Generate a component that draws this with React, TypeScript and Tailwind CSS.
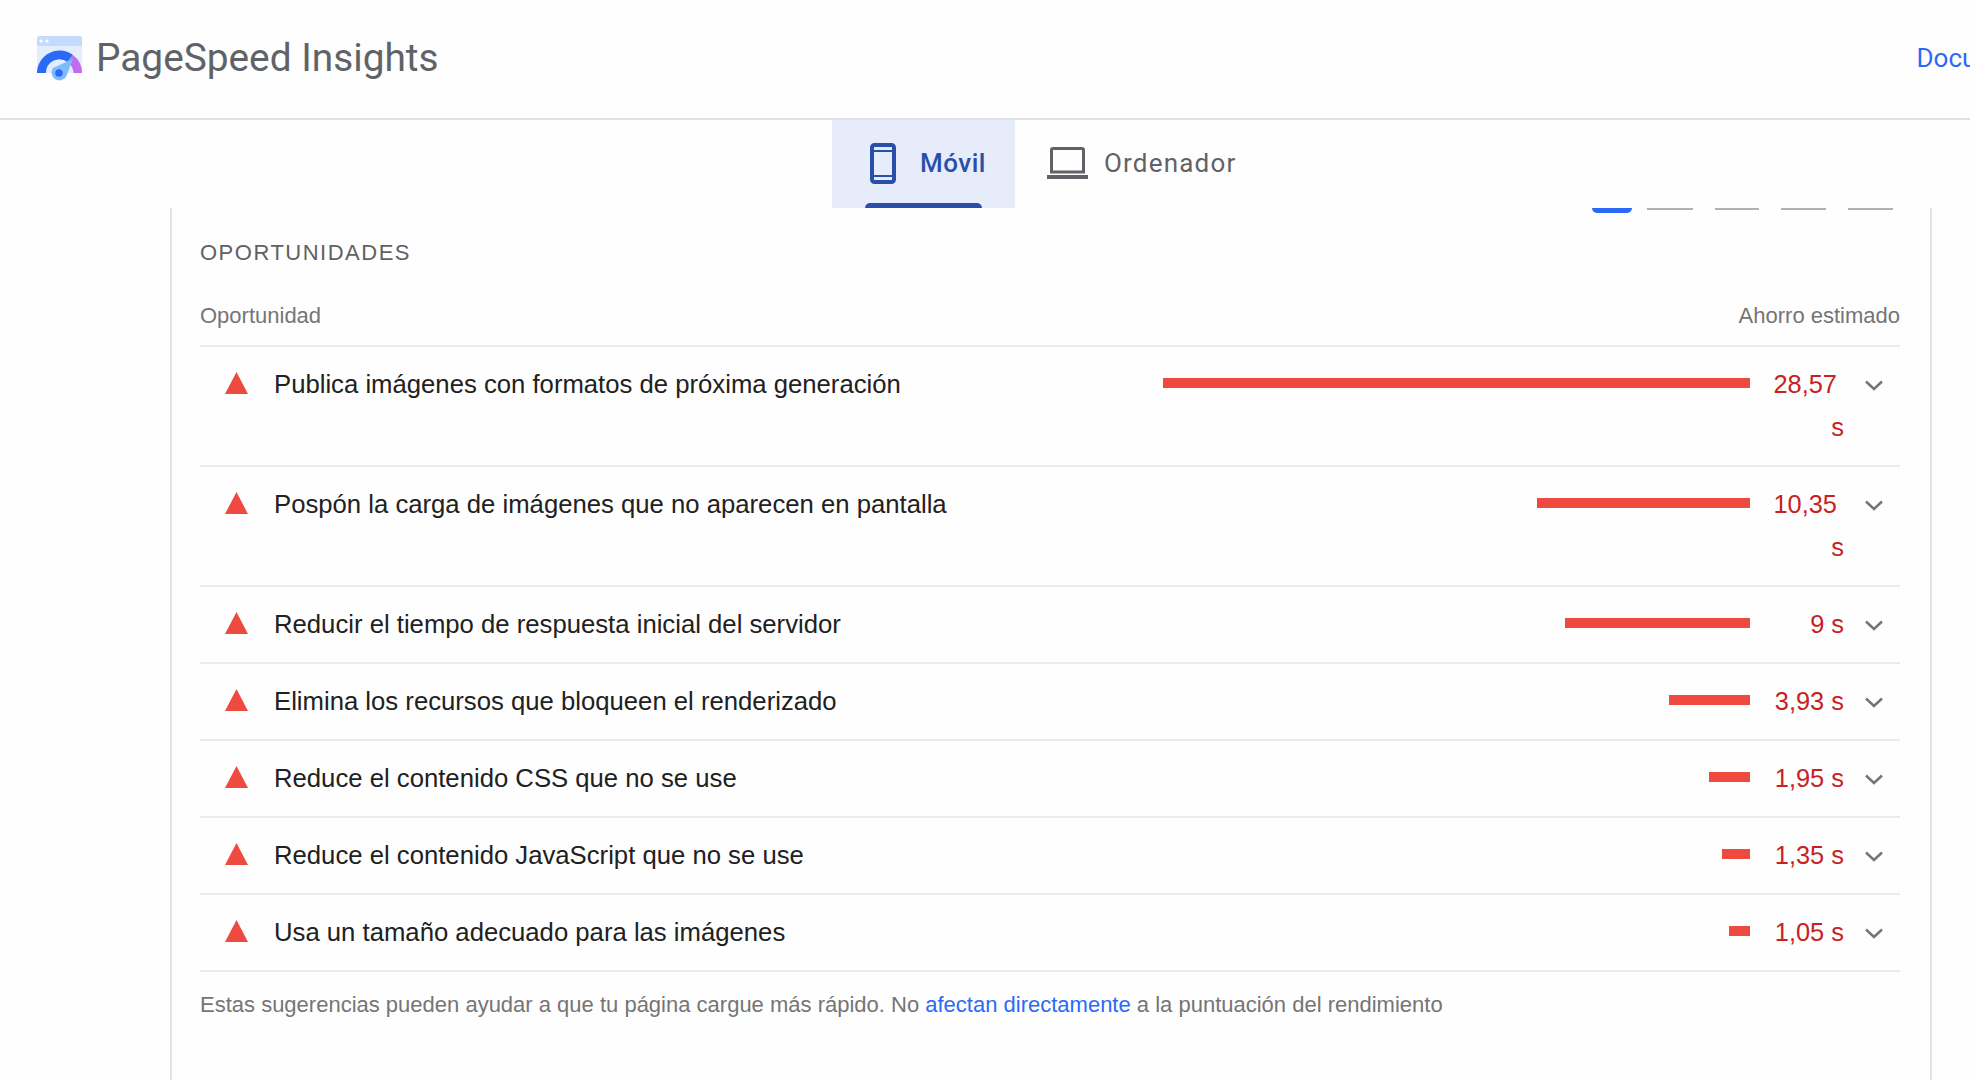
const rows = [
  { title: "Publica imágenes con formatos de próxima generación", bar: 587, value: "28,57\u00a0 s" },
  { title: "Pospón la carga de imágenes que no aparecen en pantalla", bar: 213, value: "10,35\u00a0 s" },
  { title: "Reducir el tiempo de respuesta inicial del servidor", bar: 185, value: "9 s" },
  { title: "Elimina los recursos que bloqueen el renderizado", bar: 81, value: "3,93 s" },
  { title: "Reduce el contenido CSS que no se use", bar: 41, value: "1,95 s" },
  { title: "Reduce el contenido JavaScript que no se use", bar: 28, value: "1,35 s" },
  { title: "Usa un tamaño adecuado para las imágenes", bar: 21, value: "1,05 s" },
];

const Logo = () => (
  <svg width="45" height="46" viewBox="0 0 45 46" className="shrink-0">
    <path d="M0 3a2 2 0 0 1 2-2h41a2 2 0 0 1 2 2v8H0z" fill="#c3dcfd" />
    <path d="M0 11h45v27H0z" fill="#e3edfe" />
    <circle cx="4" cy="6" r="1.6" fill="#fff" />
    <circle cx="10" cy="6" r="1.6" fill="#fff" />
    <path d="M0 38a22.500 22.500 0 0 1 36-18l-5.500 7A13.500 13.500 0 0 0 9 38z" fill="#2a6af6" />
    <path d="M36 20a22.500 22.500 0 0 1 9 18h-8.500a14 14 0 0 0-5.500-10.500z" fill="#c06cf0" />
    <path d="M16 33 36 24 29 42a7.800 7.800 0 0 1-13-9z" fill="#7ebcf9" />
    <circle cx="22" cy="38" r="3.800" fill="#2a6af6" />
  </svg>
);

const PhoneIcon = () => (
  <svg width="26" height="41" viewBox="0 0 26 41" fill="none" stroke="#2a4fa8" className="shrink-0">
    <rect x="2" y="2" width="22" height="37" rx="2.500" strokeWidth="4" />
    <path d="M2 8h22M2 33h22" strokeWidth="2" />
  </svg>
);

const LaptopIcon = () => (
  <svg width="41" height="32" viewBox="0 0 41 32" fill="none" className="shrink-0">
    <path d="M4.500 25V3a1.500 1.500 0 0 1 1.500-1.500h29a1.500 1.500 0 0 1 1.500 1.500v22z" stroke="#5f6368" strokeWidth="3" />
    <path d="M0 28h41v4H0z" fill="#5f6368" />
  </svg>
);

const Triangle = () => (
  <svg width="23" height="22" viewBox="0 0 23 22" className="ml-[25px] mt-[9px] shrink-0">
    <path d="M11.500 0 23 22H0z" fill="#ef4a3f" />
  </svg>
);

const Chevron = () => (
  <svg width="18" height="11" viewBox="0 0 18 11" fill="none" stroke="#757575" strokeWidth="2.500" className="ml-[21px] mt-[17px] shrink-0">
    <path d="M1 1.500 9 9l8-7.500" />
  </svg>
);

export default function App() {
  return (
    <div className="h-[1080px] w-[1970px] overflow-hidden bg-[#fefefe] font-['Liberation_Sans',sans-serif]">
      {/* Header */}
      <header className="flex h-[120px] items-center overflow-hidden border-b-2 border-[#e0e2e8] pb-[2px] pl-[37px]">
        <Logo />
        <span className="ml-[14px] shrink-0 font-['Roboto',sans-serif] text-[38.800px] text-[#5f6368]">PageSpeed Insights</span>
        <a className="ml-[1478px] shrink-0 whitespace-nowrap font-['Roboto',sans-serif] text-[26px] text-[#2a6af6]">Documentación</a>
      </header>

      {/* Tabs */}
      <nav className="flex h-[88px] pl-[832px] font-['Roboto',sans-serif] text-[26px] tracking-[1.2px]">
        <div className="relative flex w-[183px] items-center bg-[#e6ecfa] pb-[2px] pl-[38px] font-medium tracking-[0.5px] text-[#2a4fa8]">
          <PhoneIcon />
          <span className="ml-[24px]">Móvil</span>
          <div className="absolute bottom-0 left-[33px] h-[5px] w-[117px] rounded-t-md bg-[#2a4fa8]" />
        </div>
        <div className="flex items-center pb-[2px] pl-[32px] text-[#5f6368]">
          <LaptopIcon />
          <span className="ml-[16px]">Ordenador</span>
        </div>
      </nav>

      {/* Card */}
      <main className="ml-[170px] h-[872px] w-[1762px] border-x-2 border-[#e0e2e8] pl-[28px] pr-[30px]">
        <div className="flex h-[5px] justify-end pr-[7px]">
          <div className="h-[5px] w-[40px] rounded-b-md bg-[#2a6af6]" />
          <div className="ml-[15px] h-[2px] w-[46px] bg-[#b0b0b0]" />
          <div className="ml-[22px] h-[2px] w-[44px] bg-[#b0b0b0]" />
          <div className="ml-[22px] h-[2px] w-[45px] bg-[#b0b0b0]" />
          <div className="ml-[22px] h-[2px] w-[45px] bg-[#b0b0b0]" />
        </div>

        <h2 className="mt-[28px] text-[22px] leading-[24px] tracking-[1.500px] text-[#616161]">OPORTUNIDADES</h2>

        <div className="mt-[38px] flex h-[44px] justify-between border-b-2 border-[#ebebeb] text-[22px] leading-[26px] text-[#757575]">
          <span>Oportunidad</span>
          <span>Ahorro estimado</span>
        </div>

        {rows.map((row) => (
          <div key={row.title} className="flex items-start border-b-2 border-[#ebebeb] py-4 text-[25.700px] leading-[43px]">
            <Triangle />
            <span className="ml-[26px] text-[#212121]">{row.title}</span>
            <div className="flex flex-1 justify-end">
              <div className="mt-[15px] h-[10px] bg-[#ef4a3f]" style={{ width: row.bar }} />
            </div>
            <span className="ml-[19px] w-[75px] shrink-0 text-right text-[25.400px] text-[#c7221f]">{row.value}</span>
            <Chevron />
            <div className="w-[17px] shrink-0" />
          </div>
        ))}

        <p className="mt-[20px] text-[22px] leading-[26px] text-[#757575]">
          Estas sugerencias pueden ayudar a que tu página cargue más rápido. No{" "}
          <a className="text-[#2a6af6]">afectan directamente</a> a la puntuación del rendimiento
        </p>
      </main>
    </div>
  );
}
